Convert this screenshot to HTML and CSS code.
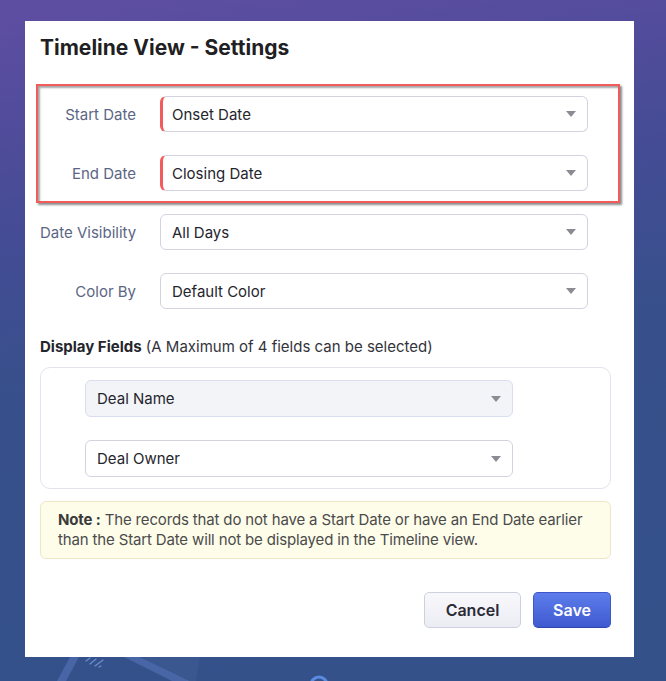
FILE: index.html
```html
<!DOCTYPE html>
<html lang="en">
<head>
<meta charset="utf-8">
<title>Timeline View - Settings</title>
<link rel="stylesheet" href="styles.css">
</head>
<body>
<svg class="bg-art" width="666" height="681" viewBox="0 0 666 681" aria-hidden="true">
  <path d="M70 657 L79 657 L66 681 L57 681 Z" fill="#4866a6"/>
  <path d="M124 657 L140 657 L190 681 L172 681 Z" fill="#4866a6"/>
  <path d="M140 657 L200 657 L196 681 L190 681 Z" fill="#3a5790"/>
  <g stroke="#6a8fd0" stroke-width="1.2" stroke-linecap="round">
    <line x1="86" y1="661" x2="90" y2="658"/>
    <line x1="90" y1="664" x2="96" y2="659"/>
    <line x1="95" y1="666" x2="103" y2="660"/>
    <line x1="99" y1="667" x2="101" y2="666"/>
  </g>
  <circle cx="319" cy="685" r="8" fill="none" stroke="#5a8be0" stroke-width="3"/>
</svg>

<div class="panel">
  <h1 class="title">Timeline View - Settings</h1>

  <div class="highlight">
    <div class="row">
      <label class="label">Start Date</label>
      <div class="select required"><span>Onset Date</span><i class="caret"></i></div>
    </div>
    <div class="row">
      <label class="label">End Date</label>
      <div class="select required"><span>Closing Date</span><i class="caret"></i></div>
    </div>
  </div>

  <div class="plain-rows">
    <div class="row">
      <label class="label">Date Visibility</label>
      <div class="select"><span>All Days</span><i class="caret"></i></div>
    </div>
    <div class="row">
      <label class="label">Color By</label>
      <div class="select"><span>Default Color</span><i class="caret"></i></div>
    </div>
  </div>

  <p class="section-title"><b>Display Fields</b> (A Maximum of 4 fields can be selected)</p>

  <div class="fields-box">
    <div class="select field locked"><span>Deal Name</span><i class="caret"></i></div>
    <div class="select field"><span>Deal Owner</span><i class="caret"></i></div>
  </div>

  <div class="note">
    <p class="note-text"><b>Note :</b> The records that do not have a Start Date or have an End Date earlier than the Start Date will not be displayed in the Timeline view.</p>
  </div>

  <div class="actions">
    <button class="btn btn-cancel">Cancel</button>
    <button class="btn btn-save">Save</button>
  </div>
</div>
</body>
</html>
```

FILE: styles.css
```css
* { box-sizing: border-box; }

html, body {
  margin: 0;
  padding: 0;
}

body {
  width: 666px;
  height: 681px;
  overflow: hidden;
  position: relative;
  font-family: Inter, "Noto Sans", "Liberation Sans", sans-serif;
  background: linear-gradient(172deg, #5f4ea2 0%, #534c9c 14%, #434c94 32%, #37508b 52%, #34518a 100%);
  padding-top: 21px;
  padding-left: 25px;
}

.bg-art {
  position: absolute;
  left: 0;
  top: 0;
  z-index: 0;
}

.panel {
  position: relative;
  z-index: 1;
  width: 609px;
  height: 636px;
  background: #ffffff;
  padding: 15px 23px 0 15px;
  display: flex;
  flex-direction: column;
}

.title {
  margin: 0;
  font-size: 21px;
  line-height: 24px;
  font-weight: 700;
  color: #1f1f24;
}

.highlight {
  margin-top: 24px;
  margin-left: -4px;
  width: 584px;
  border: 2px solid #f25b5b;
  padding: 10px 0 10px 2px;
  display: flex;
  flex-direction: column;
  gap: 23px;
  box-shadow: inset 2px 2px 2px rgba(0, 0, 0, 0.35), 2px 2px 2px rgba(0, 0, 0, 0.45);
}

.plain-rows {
  margin-top: 11px;
  display: flex;
  flex-direction: column;
  gap: 23px;
}

.row {
  display: grid;
  grid-template-columns: 96px 428px;
  column-gap: 24px;
  align-items: center;
}

.label {
  text-align: right;
  font-size: 15px;
  color: #5b6684;
  white-space: nowrap;
}

.select {
  height: 36px;
  border: 1px solid #d3d3e0;
  border-radius: 6px;
  background: #ffffff;
  display: flex;
  align-items: center;
  justify-content: space-between;
  padding: 0 11px 0 11px;
  font-size: 15px;
  color: #25252d;
}

.select.required {
  border-left: 3px solid #f25b5b;
  padding-left: 9px;
}

.caret {
  width: 0;
  height: 0;
  border-left: 5px solid transparent;
  border-right: 5px solid transparent;
  border-top: 6px solid #8b8b93;
}

.section-title {
  margin: 29px 0 0 0;
  font-size: 15px;
  line-height: 18px;
  color: #33333b;
}

.section-title b {
  font-weight: 700;
  color: #25252d;
}

.fields-box {
  margin-top: 11px;
  width: 571px;
  border: 1px solid #e1e4ee;
  border-radius: 10px;
  padding: 12px 0 11px 44px;
  display: flex;
  flex-direction: column;
  gap: 23px;
}

.field {
  width: 428px;
  height: 37px;
}

.field.locked {
  background: #f3f4f8;
  border-color: #d8ddf0;
}

.note {
  margin-top: 12px;
  width: 571px;
  height: 58px;
  background: #fefdea;
  border: 1px solid #ede7c8;
  border-radius: 6px;
  padding: 8px 10px 0 17px;
}

.note-text {
  margin: 0;
  font-size: 15px;
  line-height: 20px;
  letter-spacing: -0.15px;
  color: #4b4b4b;
}

.note-text b {
  font-weight: 700;
  color: #3a3a3a;
}

.actions {
  margin-top: 33px;
  display: flex;
  justify-content: flex-end;
  gap: 12px;
}

.btn {
  font-family: inherit;
  font-size: 16px;
  font-weight: 600;
  height: 36px;
  border-radius: 5px;
  cursor: pointer;
  padding: 0;
}

.btn-cancel {
  width: 97px;
  color: #2b2b36;
  background: linear-gradient(#f8f8fc, #ececf4);
  border: 1px solid #cdd0df;
}

.btn-save {
  width: 78px;
  color: #ffffff;
  background: linear-gradient(#5d7deb, #3f5ad0);
  border: 1px solid #3d57c8;
  border-bottom-color: #2f47ad;
}
```
